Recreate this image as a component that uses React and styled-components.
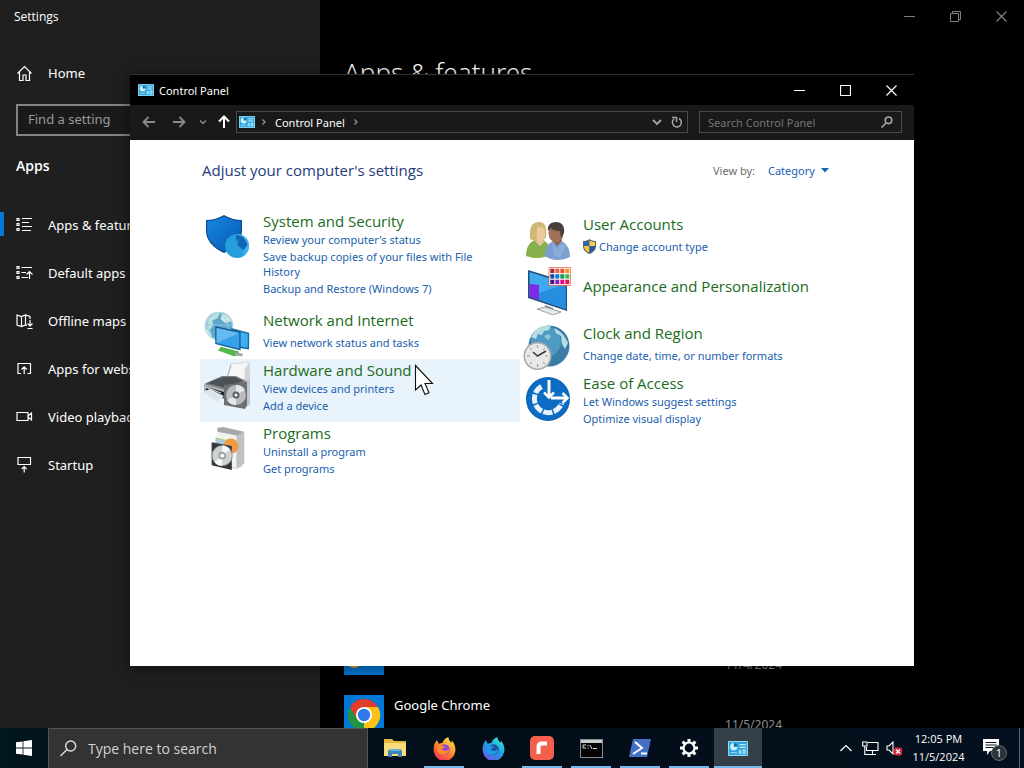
import React, {useState} from 'react';
import styled, {createGlobalStyle} from 'styled-components';

const GlobalStyle = createGlobalStyle`
  * {
    box-sizing: border-box;
  }
  body {
    margin: 0;
    background: #000;
    font-family: "Noto Sans", "Open Sans", sans-serif;
  }
  button, input, select {
    font-family: inherit;
  }
`;
const Screen = styled.div`
  height: 100vh;
  display: flex;
  flex-direction: column;
  overflow: hidden;
`;
const Desktop = styled.main`
  position: relative;
  flex: 1;
  min-height: 0;
  display: flex;
  overflow: hidden;
  background: #000;
`;

/* settings app */
const Sidebar = styled.aside`
  width: 320px;
  flex-shrink: 0;
  background: #1f1f1f;
  color: #fff;
`;
const AppTitle = styled.div`
  height: 32px;
  padding-left: 14px;
  font-family: "Open Sans", sans-serif;
  font-size: 12px;
  line-height: 33px;
`;
const NavLink = styled.a`
  height: 48px;
  padding-left: 16px;
  display: flex;
  align-items: center;
  gap: 15px;
  color: #fff;
  font-size: 13px;
  text-decoration: none;
  svg {
    flex-shrink: 0;
  }
`;
const HomeLink = styled(NavLink)`
  margin-top: 17px;
`;
const NavItem = styled.li`
  position: relative;
  &::before {
    content: "";
    display: ${props => props.$active ? 'block' : 'none'};
    position: absolute;
    left: 0;
    top: 11px;
    width: 4px;
    height: 24px;
    background: #0078d7;
  }
`;
const FindBox = styled.input`
  display: block;
  width: 288px;
  height: 32px;
  margin: 7px 16px 0;
  padding: 0 10px 2px;
  background: #1a1a1a;
  border: 2px solid #858585;
  color: #fff;
  font-size: 13px;
  &::placeholder {
    color: #999;
    opacity: 1;
  }
`;
const NavHeading = styled.h2`
  margin: 20px 0 22px 16px;
  font-family: "Open Sans", sans-serif;
  font-size: 14px;
  line-height: 20px;
  font-weight: 600;
`;
const NavList = styled.ul`
  margin: 0;
  padding: 3px 0 0;
  list-style: none;
`;
const Pane = styled.section`
  flex: 1;
  display: flex;
  flex-direction: column;
  color: #fff;
`;
const CaptionBar = styled.div`
  display: flex;
  justify-content: flex-end;
`;
const CaptionButton = styled.button`
  width: 46px;
  height: ${props => props.$dim ? '32px' : '30px'};
  padding: 0;
  display: flex;
  align-items: center;
  justify-content: center;
  background: none;
  border: 0;
  color: ${props => props.$dim ? '#808080' : '#fff'};
`;
const PaneTitle = styled.h1`
  margin: 19px 0 0 24px;
  font-size: 26px;
  font-weight: 300;
  line-height: 42px;
`;
const AppList = styled.ul`
  margin: auto 0 -27px;
  padding: 0 24px;
  list-style: none;
`;
const AppRow = styled.li`
  width: 438px;
  height: 60px;
  display: flex;
  gap: 10px;
`;
const AppName = styled.span`
  flex: 1;
  font-size: 13px;
  line-height: 20px;
`;
const AppDate = styled.span`
  padding-top: 20px;
  color: #8c8c8c;
  font-size: 12px;
  line-height: 20px;
`;

/* control panel window */
const Window = styled.section`
  position: absolute;
  left: 130px;
  right: 110px;
  top: 74px;
  bottom: 62px;
  display: flex;
  flex-direction: column;
  background: #fff;
  box-shadow: 0 2px 14px rgba(0, 0, 0, 0.5);
`;
const TitleBar = styled.header`
  height: 31px;
  flex-shrink: 0;
  display: flex;
  align-items: center;
  padding-left: 8px;
  gap: 5px;
  background: #000;
  border-top: 1px solid #303030;
  color: #fff;
  font-size: 11px;
`;
const WindowTitle = styled.h1`
  flex: 1;
  margin: 0;
  font-size: inherit;
  font-weight: 400;
`;
const Toolbar = styled.div`
  height: 35px;
  flex-shrink: 0;
  display: flex;
  align-items: center;
  padding: 0 12px 1px 4px;
  background: #191919;
`;
const NavButton = styled.button`
  width: ${props => props.$narrow ? '17px' : '30px'};
  height: 24px;
  padding: 0;
  display: flex;
  align-items: center;
  justify-content: center;
  background: none;
  border: 0;
  color: ${props => props.$on ? '#fff' : '#8a8a8a'};
`;
const UpButton = styled(NavButton)`
  width: 25px;
`;
const AddressBar = styled.div`
  flex: 1;
  height: 22px;
  display: flex;
  align-items: center;
  padding-left: 2px;
  gap: 6px;
  border: 1px solid #4a4a4a;
  color: #999;
`;
const Crumb = styled.a`
  margin: 0 2px;
  color: #fff;
  font-size: 11px;
  text-decoration: none;
`;
const AddressTools = styled.div`
  margin-left: auto;
  display: flex;
`;
const ToolButton = styled.button`
  width: 20px;
  height: 20px;
  padding: 0;
  display: flex;
  align-items: center;
  justify-content: center;
  background: none;
  border: 0;
  color: #a6a6a6;
`;
const SearchField = styled.div`
  width: 203px;
  height: 22px;
  margin-left: 11px;
  display: flex;
  align-items: center;
  padding: 0 4px 0 8px;
  border: 1px solid #4a4a4a;
`;
const SearchInput = styled.input`
  flex: 1;
  min-width: 0;
  padding: 0;
  background: none;
  border: 0;
  color: #fff;
  font-size: 11px;
  &::placeholder {
    color: #757575;
    opacity: 1;
  }
`;
const Content = styled.div`
  flex: 1;
  padding: 19px 74px 0 70px;
`;
const ContentHead = styled.div`
  display: flex;
  justify-content: space-between;
  align-items: center;
  height: 22px;
  padding: 0 11px 0 2px;
  margin-bottom: 29px;
`;
const ContentTitle = styled.h2`
  margin: 0;
  color: #1e3c78;
  font-family: "Open Sans", sans-serif;
  font-size: 15px;
  font-weight: 400;
`;
const ViewBy = styled.div`
  display: flex;
  align-items: center;
  color: #6d6d6d;
  font-size: 11px;
  label {
    margin-right: 13px;
  }
`;
const ViewSelect = styled.select`
  appearance: none;
  padding: 0 6px 0 0;
  background: none;
  border: 0;
  color: #1560b8;
  font-size: 11px;
`;
const Columns = styled.div`
  display: grid;
  grid-template-columns: 1fr 1fr;
  align-items: start;
`;
const Column = styled.ul`
  margin: 0;
  padding: ${props => props.$low ? '3px' : '0'} 0 0;
  list-style: none;
`;
const CategoryItem = styled.li`
  display: flex;
  gap: 12px;
  min-height: ${props => props.$count === 0 ? '59px' : '50px'};
  padding: 1px 20px ${props => props.$count > 2 ? '12px' : props.$count === 2 ? '8px' : '0'} 3px;
  background: ${props => props.$hot ? '#e9f3fb' : 'none'};
  > svg {
    flex-shrink: 0;
    margin: ${props => props.$count === 0 ? '3px' : '1px'} 0 -7px;
  }
`;
const CategoryLink = styled.a`
  display: block;
  color: #1a6b20;
  font-family: "Open Sans", sans-serif;
  font-size: 15px;
  line-height: ${props => props.$count === 0 ? '44px' : '20px'};
  margin-bottom: ${props => props.$count === 1 ? '4px' : '0'};
  text-decoration: none;
`;
const TaskLink = styled.a`
  display: flex;
  align-items: center;
  gap: 3px;
  padding: 1px 0;
  color: #1a60ae;
  font-size: 11px;
  line-height: 15px;
  text-decoration: none;
  svg {
    flex-shrink: 0;
  }
`;
const Pointer = styled.svg`
  position: absolute;
  left: 414px;
  top: 364px;
`;

/* taskbar */
const Taskbar = styled.footer`
  height: 40px;
  flex-shrink: 0;
  display: flex;
  background: linear-gradient(90deg, #02161e, #030d18 50%, #04101e);
  color: #fff;
  font-family: "Open Sans", sans-serif;
`;
const StartButton = styled.button`
  width: 48px;
  padding: 0;
  display: flex;
  align-items: center;
  justify-content: center;
  background: none;
  border: 0;
`;
const TaskSearch = styled.div`
  width: 320px;
  display: flex;
  align-items: center;
  gap: 11px;
  padding-left: 11px;
  background: #333;
  border: 1px solid #545454;
  border-bottom: 0;
  input {
    flex: 1;
    min-width: 0;
    padding: 0;
    background: none;
    border: 0;
    color: #fff;
    font-size: 14px;
  }
  input::placeholder {
    color: #d2d2d2;
    opacity: 1;
  }
`;
const TaskButtons = styled.div`
  flex: 1;
  display: flex;
  gap: 1px;
  padding-left: 3px;
`;
const TaskButton = styled.button`
  position: relative;
  width: 48px;
  padding: 0;
  display: flex;
  align-items: center;
  justify-content: center;
  background: ${props => props.$front ? '#353f47' : 'none'};
  border: 0;
  &::after {
    content: "";
    display: ${props => props.$open ? 'block' : 'none'};
    position: absolute;
    left: ${props => props.$front ? '0' : '4px'};
    right: ${props => props.$front ? '0' : '4px'};
    bottom: 0;
    height: 2px;
    background: #76b9ed;
  }
`;
const Tray = styled.div`
  display: flex;
  align-items: center;
`;
const TrayButton = styled.button`
  width: 24px;
  height: 40px;
  padding: 0;
  display: flex;
  align-items: center;
  justify-content: center;
  background: none;
  border: 0;
`;
const Clock = styled.div`
  width: 65px;
  font-size: 11px;
  line-height: 18px;
  text-align: center;
`;
const NoticeButton = styled(TrayButton)`
  width: 48px;
`;
const ShowDesktop = styled.button`
  width: 5px;
  height: 40px;
  padding: 0;
  background: none;
  border: 0;
  border-left: 1px solid #5c646c;
`;

const Line = ({children, size = 17}) => (
    <svg width={size} height={size} viewBox="0 0 17 17" fill="none" stroke="#fff" strokeWidth="1.2">{children}</svg>
);
const HomeIcon = () => <Line><path d="M1.5 8.5 8.5 1.500 15.500 8.500M3.500 7V15.500H7V10H10V15.500H13.500V7"/></Line>;
const FeaturesIcon = () => <Line><path d="M1 1.500h2v2H1zM1 6.500h2v2H1zM1 11.500h2v2H1zM6 1.500h10M6 5.500h7M6 9.500h10M6 13.500h9"/></Line>;
const DefaultsIcon = () => <Line><path d="M1 1.500h2v2H1zM1 6.500h2v2H1zM1 11.500h2v2H1zM5.500 2.500H16M5.500 7.500H10M5.500 12.500H12M13.500 14V6.500M10.500 9.500l3-3 3 3"/></Line>;
const MapIcon = () => <Line><path d="M11 12.500 9.500 12 5.500 13.500 1 12V2L5.500 3.500 9.500 2 14 3.500V6M5.500 3.500V13.500M9.500 2V12M14 7V13M11.500 10.500 14 13l2.500-2.500M11.500 15.500H16.500"/></Line>;
const WebIcon = () => <Line><path d="M5 12.500H2V2.500H14.500V12.500H11.500M8.200 13V6M5.500 8.500l2.700-2.700 2.700 2.700"/></Line>;
const VideoIcon = () => <Line><path d="M1 3.500h11v8H1zM12 7 15.500 4V11L12 8z"/></Line>;
const StartupIcon = () => <Line><path d="M2 .5h12.500v7H2zM8.200 15.500V9.500M5.800 12l2.400-2.500L10.600 12"/></Line>;

const Minimize = () => <svg width="11" height="11"><path d="M0 5.500h11" stroke="currentColor"/></svg>;
const Maximize = () => <svg width="11" height="11"><path d="M.5.5h10v10H.5z" fill="none" stroke="currentColor" strokeWidth="1.2"/></svg>;
const Restore = () => <svg width="11" height="11" fill="none" stroke="currentColor"><path d="M.5 2.500h8v8h-8zM2.500 2.500v-2h8v8h-2"/></svg>;
const Close = () => <svg width="11" height="11"><path d="M.5.5l10 10M10.500.5l-10 10" stroke="currentColor" strokeWidth="1.200"/></svg>;

const PanelIcon = ({width = 16}) => (
    <svg width={width} height={width * 12 / 16} viewBox="0 0 16 12">
        <rect width="16" height="12" rx="0.600" fill="#8bdcf5"/>
        <rect x="0.800" y="0.800" width="14.400" height="10.400" fill="#33a4de"/>
        <circle cx="4.700" cy="4.500" r="2.900" fill="#c9f1fc"/>
        <path d="M4.700 4.500V1.600A2.900 2.900 0 0 1 7.600 4.500z" fill="#1269a8"/>
        <path d="M9.200 2.800h5M9.200 5h5" stroke="#b9ecfc" strokeWidth="1"/>
        <path d="M2 9.300h5M9 7.500h1.500v2.500H9zM12 7h2v3h-2z" stroke="#a6e6fb" strokeWidth="0.700" fill="#74cef2"/>
    </svg>
);
const Arrow = ({d, w = 1.800}) => <svg width="14" height="14" viewBox="0 0 14 14" fill="none" stroke="currentColor" strokeWidth={w}><path d={d}/></svg>;
const Chevron = () => <svg width="6" height="8" viewBox="0 0 6 8" fill="none" stroke="#999" strokeWidth="1.300"><path d="M1.500 1.500 4 4 1.500 6.500"/></svg>;

const UacShield = ({size = 13}) => (
    <svg width={size} height={size + 2} viewBox="0 0 13 15">
        <path d="M6.500 0C4.500 1.500 2.500 2 0 2v5c0 4 3 6.500 6.500 8C10 13.500 13 11 13 7V2C10.500 2 8.500 1.500 6.500 0z" fill="#5c6268"/>
        <path d="M6.500 1.200C5 2.300 3 2.900 1 3v4h5.500z" fill="#2d62b5"/>
        <path d="M6.500 1.200C8 2.300 10 2.900 12 3v4H6.500z" fill="#f5d34b"/>
        <path d="M1 7c0 3.500 2.500 5.500 5.500 6.800V7z" fill="#f2c531"/>
        <path d="M12 7c0 3.500-2.500 5.500-5.500 6.800V7z" fill="#2459ad"/>
    </svg>
);

const Art = ({children, viewBox = '0 0 48 48'}) => <svg width="48" height="48" viewBox={viewBox}>{children}</svg>;
const SecurityArt = () => (
    <Art>
        <defs>
            <linearGradient id="shield" x1="0" y1="0" x2="1" y2="1"><stop offset="0" stopColor="#1688df"/><stop offset="1" stopColor="#0558b4"/></linearGradient>
        </defs>
        <path d="M21 3C16 6 9 8 3 8v11c0 9 7 17 18 22 11-5 18-13 18-22V8C33 8 26 6 21 3z" fill="#0b4b8f"/>
        <path d="M21 4.500C16 7 10 9 4.200 9v10c0 8.500 6.500 15.500 16.800 20.500C31.300 34.500 37.800 27.500 37.800 19V9C32 9 26 7 21 4.500z" fill="url(#shield)"/>
        <circle cx="34" cy="34" r="12" fill="#249edd"/>
        <path d="M34 22a12 12 0 0 1 12 12c0 4-2 7.500-4.500 9.500z" fill="#43b4ec"/>
        <path d="M33 23c6 0 10 4 11.500 10l-4 5-5-1-2-6z" fill="#1266b7"/>
        <path d="M36 27l-2 6 5 4 4 1c-4 4-10 2-11-3 0-3 1-6 4-8z" fill="#2b9ddd"/>
    </Art>
);
const NetworkArt = () => (
    <Art viewBox="0 0 51 51">
        <circle cx="17" cy="16" r="15" fill="#5ba9cc"/>
        <circle cx="17" cy="16" r="14.500" fill="none" stroke="#b3d9e6" strokeWidth="1.500"/>
        <path d="M5 9c4-5 8-7 13-7l-3 6-5 2 1 5-5 7-3-6z" fill="#b9dfe1"/>
        <path d="M20 3c5 1 8 4 10 8l-6 2-5-4zM3 18l5 4 2 7c-5-3-7-7-7-11z" fill="#d3e9e3"/>
        <path d="M8 4c-5 8-4 17 2 25M19 2c7 7 9 14 7 22M2 15h30" stroke="#96cae0" fill="none"/>
        <path d="M19 38l19 5v4l-5 1-17-6z" fill="#51b84a"/>
        <path d="M30 18l19 5v18l-19-3z" fill="#176ca5"/>
        <path d="M31 20l16.500 4.500V39L31 36z" fill="#3faff2"/>
        <path d="M13 16l27 6v20l-27-7z" fill="#165f96"/>
        <path d="M14.500 18 38.500 23.500V40L14.500 34z" fill="#389fe9"/>
        <path d="M14.500 18 38.500 23.500 14.500 34z" fill="#65bbf1"/>
        <path d="M34 45l8 2" stroke="#a4a4a4" strokeWidth="3"/>
    </Art>
);
const HardwareArt = () => (
    <Art>
        <path d="M28 3l19-2-5 18H23z" fill="#f5f6f7" stroke="#c8cbd0" strokeWidth=".7"/>
        <path d="M42 7l5-6v20l-6 4z" fill="#d1d4d8"/>
        <path d="M28 4l-4 14" stroke="#aab0b6"/>
        <path d="M1 23l18-8h14l10 5-4 13H22z" fill="#7b8084"/>
        <path d="M4 22l16-6h12l8 4-17 7z" fill="#4c5156"/>
        <path d="M1 23l22 6v10L1 30z" fill="#a7adb2"/>
        <path d="M3 26l18 5v6L3 29z" fill="#202428"/>
        <path d="M0 31l7-3 14 7-7 6z" fill="#dde5ea"/>
        <path d="M2 26l16 6" stroke="#dbe7ee"/>
        <path d="M43 20l4-2v25l-6 5z" fill="#c4c6c8"/>
        <path d="M21 24l23-3v23l-2 4-21-4z" fill="#6b7075"/>
        <circle cx="33" cy="34" r="10" fill="#b9bdc1"/>
        <path d="M33 24a10 10 0 0 1 9 5L33 34zM33 44a10 10 0 0 1-9-5L33 34z" fill="#e4e7e9"/>
        <circle cx="33" cy="34" r="3.500" fill="#5a6067"/>
        <circle cx="33" cy="34" r="1.500" fill="#fff"/>
    </Art>
);
const ProgramsArt = () => (
    <Art viewBox="-1 -1 50 50">
        <path d="M14 3l26 4v36l-7 3-19-5z" fill="#d2d2d0"/>
        <path d="M14 3l20 5v37L14 40z" fill="#f2f2ef"/>
        <path d="M34 10l8-3v33l-8 6z" fill="#bfc1c3"/>
        <path d="M14 3l6-1 22 5-8 4-20-4z" fill="#a6a9ac"/>
        <path d="M12 13l18 4v8l-18-4z" fill="#a9cf8d"/>
        <circle cx="28" cy="22" r="8" fill="#f09b45"/>
        <path d="M13 14l9 3-3 8-7-5z" fill="#a9cae4"/>
        <path d="M8 18l21 4v25L8 42z" fill="#35383b"/>
        <circle cx="19" cy="32" r="10.500" fill="#ced2d3" stroke="#8e9496"/>
        <path d="M19 21.500a10 10 0 0 1 8 4L19 32zM19 42.500a10 10 0 0 1-8-4L19 32z" fill="#f7f8f8"/>
        <circle cx="19" cy="32" r="4" fill="#9da3a6"/>
        <circle cx="19" cy="32" r="2" fill="#fff"/>
    </Art>
);
const UsersArt = () => (
    <Art viewBox="0 -1 48 48">
        <path d="M3 40c0-8 3-14 9-16h8c5 2 8 8 8 14-7 5-17 5-25 2z" fill="#86b04b"/>
        <path d="M7 23c-1-12 2-17 9-17 6 0 8 4 7 16-5 3-11 4-16 1z" fill="#cfb874"/>
        <path d="M14 12c5-2 8 0 8 5 0 6-2 9-5 9s-4-4-3-8z" fill="#edc9a2"/>
        <path d="M12 25l5 5 5-5z" fill="#efc395"/>
        <path d="M22 40c0-9 3-13 9-15h7c6 2 9 9 9 16-9 4-18 4-25-1z" fill="#7b9fd0"/>
        <path d="M29 24l5 6 5-5-1-6h-8z" fill="#8d6148"/>
        <ellipse cx="33" cy="17" rx="7.500" ry="9.500" fill="#9e7158"/>
        <path d="M25 15c-1-6 3-9 8-9 6 0 9 4 8 11l-3 5-1-7c-4 0-8-1-9-3z" fill="#4a403b"/>
        <path d="M29 27l5 6 5-6 4 2-6 13-6-3z" fill="#8badd9"/>
    </Art>
);
const AppearanceArt = () => (
    <Art>
        <path d="M5 3l39 12v29L5 31z" fill="#214e7a"/>
        <path d="M6.500 5l36 11.500v25.500L6.500 29.500z" fill="#40a9ee"/>
        <path d="M6.500 29.500 42.500 17v25z" fill="#268ee0"/>
        <path d="M6.500 17 16 18v15L6.500 29.500z" fill="#8127e8"/>
        <path d="M22 38l8 3v4l-8-2z" fill="#8b8e91"/>
        <path d="M14 42l8-2 16 5-8 3z" fill="#e6eaec" stroke="#858d93" strokeWidth=".8"/>
        <path d="M26 .4h21.600v18H26z" fill="#fff" stroke="#e54d2c" strokeWidth=".7"/>
        {['#a32630', '#ed6245', '#f04f2f', '#f49423', '#164aa9', '#0a7dcb', '#16965b', '#43b64c', '#45107c', '#8123ac', '#e40b84', '#e3174f'].map((fill, i) => (
            <rect key={fill} x={27.300 + (i % 4) * 5} y={1.700 + Math.floor(i / 4) * 5.500} width="4" height="4.400" fill={fill}/>
        ))}
    </Art>
);
const ClockArt = () => (
    <Art>
        <circle cx="26" cy="22" r="20.500" fill="#397ca5"/>
        <circle cx="23" cy="18" r="15" fill="#4e9ac3"/>
        <path d="M12 7c5-5 10-6 16-5l-2 4-5 1-2 4-4-1-2 5-5-2zM31 4c7 3 11 8 14 15l-3 6-3-5-1-8-5-3z" fill="#b4dde4"/>
        <path d="M21 12l5-2 2 3-3 3z" fill="#8fc8d7"/>
        <circle cx="14.500" cy="32" r="14" fill="#a7abae"/>
        <circle cx="14.500" cy="32" r="12.500" fill="#e8e8e7"/>
        <path d="M14.500 21v3M14.500 40v3M4 32h3M22 32h3M7 24l2 2M20 38l2 2M22 24l-2 2M7 40l2-2" stroke="#93989c"/>
        <path d="M10 28l4.500 4L23 27" fill="none" stroke="#3a3a3a" strokeWidth="1.500"/>
    </Art>
);
const EaseArt = () => (
    <Art>
        <circle cx="25" cy="25" r="22" fill="#0860b3"/>
        <circle cx="25" cy="25" r="21" fill="#0c6cc4"/>
        <path d="M18.500 12.500a14 14 0 1 0 20 17" fill="none" stroke="#eaf3fb" strokeWidth="5" strokeDasharray="9 1.500"/>
        <path d="M26 6v16M28 24h15" stroke="#fff" strokeWidth="3"/>
        <path d="M21 18.500l5 5 5-5M39.500 19l5 5-5 5" fill="none" stroke="#fff" strokeWidth="2.500"/>
    </Art>
);

const columns = [
    [
        {name: 'System and Security', Icon: SecurityArt, tasks: ["Review your computer's status", 'Save backup copies of your files with File History', 'Backup and Restore (Windows 7)']},
        {name: 'Network and Internet', Icon: NetworkArt, tasks: ['View network status and tasks']},
        {name: 'Hardware and Sound', Icon: HardwareArt, tasks: ['View devices and printers', 'Add a device'], hot: true},
        {name: 'Programs', Icon: ProgramsArt, tasks: ['Uninstall a program', 'Get programs']},
    ],
    [
        {name: 'User Accounts', Icon: UsersArt, tasks: ['Change account type'], shield: true},
        {name: 'Appearance and Personalization', Icon: AppearanceArt, tasks: []},
        {name: 'Clock and Region', Icon: ClockArt, tasks: ['Change date, time, or number formats']},
        {name: 'Ease of Access', Icon: EaseArt, tasks: ['Let Windows suggest settings', 'Optimize visual display']},
    ],
];
const navItems = [
    ['Apps & features', FeaturesIcon],
    ['Default apps', DefaultsIcon],
    ['Offline maps', MapIcon],
    ['Apps for websites', WebIcon],
    ['Video playback', VideoIcon],
    ['Startup', StartupIcon],
];

const FirefoxTile = () => (
    <svg width="40" height="40" viewBox="0 0 40 40">
        <rect width="40" height="40" fill="#0078d7"/>
        <circle cx="10" cy="25" r="8" fill="#f29b32"/>
    </svg>
);
const ChromeTile = () => (
    <svg width="40" height="40" viewBox="0 0 40 40">
        <rect width="40" height="40" fill="#0078d7"/>
        <path d="M20 20 6.100 12A16 16 0 0 1 33.900 12z" fill="#e33b2e"/>
        <path d="M20 20 33.900 12A16 16 0 0 1 20 36z" fill="#fbc116"/>
        <path d="M20 20 20 36A16 16 0 0 1 6.100 12z" fill="#229342"/>
        <path d="M20 12H33.900A16 16 0 0 1 20 36l7-12z" fill="#fbc116"/>
        <path d="M6.100 12 13 24l7-12z" fill="#e33b2e"/>
        <circle cx="20" cy="20" r="8" fill="#fff"/>
        <circle cx="20" cy="20" r="6.200" fill="#3278e8"/>
    </svg>
);
const FolderIcon = () => (
    <svg width="22" height="18" viewBox="0 0 22 18">
        <path d="M0 0h8l2 2h12v15H0z" fill="#e7b73b"/>
        <path d="M0 4h22v13H0z" fill="#f8dc7c"/>
        <path d="M4 18v-6l2-2h10l2 2v6h-4v-3H8v3z" fill="#3c83b8"/>
        <path d="M6 10h10v2H6z" fill="#65b0dc"/>
    </svg>
);
const FoxIcon = ({id, a, b, c, core}) => (
    <svg width="23" height="23" viewBox="0 0 24 24">
        <defs>
            <linearGradient id={id} x1="0.800" y1="0" x2="0.200" y2="1"><stop offset="0" stopColor={a}/><stop offset=".5" stopColor={b}/><stop offset="1" stopColor={c}/></linearGradient>
        </defs>
        <path d="M4 3l2 4 4-1c1-3 3-5 6-6 0 3 2 4 3 6l1-2c3 4 4 8 3 12a11.200 11.200 0 0 1-22 0C0 11 1 7 4 3z" fill={`url(#${id})`}/>
        <circle cx="12" cy="13" r="5.500" fill={core}/>
        <path d="M5 10c3-2 5-1 8 1-2 0-3 1-4 2 2 2 6 2 8-1 0 5-4 7-8 6-4 0-6-4-4-8z" fill={b}/>
    </svg>
);
const RemoteIcon = () => (
    <svg width="24" height="24" viewBox="0 0 24 24">
        <rect width="24" height="24" rx="5" fill="#f4604c"/>
        <path d="M8.500 18v-7c0-2.500 1-3.500 3.500-3.500h5" fill="none" stroke="#fff" strokeWidth="4"/>
    </svg>
);
const ConsoleIcon = () => (
    <svg width="23" height="19" viewBox="0 0 23 19">
        <rect x=".5" y=".5" width="22" height="18" fill="#050505" stroke="#8a8a8a"/>
        <path d="M1 1h21v3H1z" fill="#c9cccd"/>
        <path d="M6 6H3v3h3M8 6v1M8 8.500v1M10 6l2 4M13 9.500h4" fill="none" stroke="#ddd"/>
    </svg>
);
const PowerShellIcon = () => (
    <svg width="24" height="20" viewBox="0 0 24 20">
        <path d="M5 1h18l-4 18H1z" fill="#4370c4"/>
        <path d="M7 4l7 6-9 6M13 15.500h6" fill="none" stroke="#fff" strokeWidth="2"/>
    </svg>
);
const GearIcon = () => (
    <svg width="20" height="20" viewBox="0 0 20 20" fill="none" stroke="#fff">
        <circle cx="10" cy="10" r="5.500" strokeWidth="2.200"/>
        <path d="M10 1v3M10 16v3M1 10h3M16 10h3M3.600 3.600l2.200 2.200M14.200 14.200l2.200 2.200M3.600 16.400l2.200-2.200M14.200 5.800l2.200-2.200" strokeWidth="3"/>
    </svg>
);
const taskApps = [
    {name: 'File Explorer', icon: <FolderIcon/>},
    {name: 'Firefox', icon: <FoxIcon id="fox" a="#ffe54a" b="#ff8a2b" c="#eb2860" core="#8e4bd3"/>, open: true},
    {name: 'Firefox Developer Edition', icon: <FoxIcon id="dev" a="#35efd0" b="#1d9ae6" c="#7452df" core="#214d9e"/>},
    {name: 'Remote', icon: <RemoteIcon/>, open: true},
    {name: 'Command Prompt', icon: <ConsoleIcon/>, open: true},
    {name: 'PowerShell', icon: <PowerShellIcon/>, open: true},
    {name: 'Settings', icon: <GearIcon/>, open: true},
    {name: 'Control Panel', icon: <PanelIcon width={20}/>, open: true, front: true},
];

const Settings = () => (
    <>
        <Sidebar>
            <AppTitle>Settings</AppTitle>
            <HomeLink href="#home"><HomeIcon/>Home</HomeLink>
            <FindBox type="text" placeholder="Find a setting" aria-label="Find a setting"/>
            <NavHeading>Apps</NavHeading>
            <NavList>
                {navItems.map(([name, Icon], i) => (
                    <NavItem key={name} $active={i === 0}>
                        <NavLink href="#apps"><Icon/>{name}</NavLink>
                    </NavItem>
                ))}
            </NavList>
        </Sidebar>
        <Pane>
            <CaptionBar>
                <CaptionButton $dim aria-label="Minimize"><Minimize/></CaptionButton>
                <CaptionButton $dim aria-label="Restore"><Restore/></CaptionButton>
                <CaptionButton $dim aria-label="Close"><Close/></CaptionButton>
            </CaptionBar>
            <PaneTitle>Apps &amp; features</PaneTitle>
            <AppList>
                <AppRow><FirefoxTile/><AppName/><AppDate>11/4/2024</AppDate></AppRow>
                <AppRow><ChromeTile/><AppName>Google Chrome</AppName><AppDate>11/5/2024</AppDate></AppRow>
            </AppList>
        </Pane>
    </>
);

const Category = ({name, Icon, tasks, hot, shield}) => (
    <CategoryItem $hot={hot} $count={tasks.length}>
        <Icon/>
        <div>
            <CategoryLink href="#category" $count={tasks.length}>{name}</CategoryLink>
            {tasks.map(task => <TaskLink key={task} href="#task">{shield && <UacShield/>}{task}</TaskLink>)}
        </div>
    </CategoryItem>
);

const ControlPanel = () => {
    const [view, setView] = useState('Category');
    return (
        <Window>
            <TitleBar>
                <PanelIcon/>
                <WindowTitle>Control Panel</WindowTitle>
                <CaptionBar>
                    <CaptionButton aria-label="Minimize"><Minimize/></CaptionButton>
                    <CaptionButton aria-label="Maximize"><Maximize/></CaptionButton>
                    <CaptionButton aria-label="Close"><Close/></CaptionButton>
                </CaptionBar>
            </TitleBar>
            <Toolbar>
                <NavButton aria-label="Back"><Arrow d="M13 7H1.500M6.500 2 1.500 7l5 5"/></NavButton>
                <NavButton aria-label="Forward"><Arrow d="M1 7h11.500M7.500 2l5 5-5 5"/></NavButton>
                <NavButton $narrow aria-label="Recent locations"><Arrow d="M4 5.500 7 8.500l3-3" w={1.500}/></NavButton>
                <UpButton $on aria-label="Up"><Arrow d="M7 13V1.500M2 6.500l5-5 5 5" w={2}/></UpButton>
                <AddressBar>
                    <PanelIcon/>
                    <Chevron/>
                    <Crumb href="#control-panel">Control Panel</Crumb>
                    <Chevron/>
                    <AddressTools>
                        <ToolButton aria-label="Previous locations"><Arrow d="M3 5l4 4 4-4"/></ToolButton>
                        <ToolButton aria-label="Refresh"><Arrow d="M9 3.500A4.500 4.500 0 1 1 4 4M2 2.500h4.500V7" w={1.500}/></ToolButton>
                    </AddressTools>
                </AddressBar>
                <SearchField>
                    <SearchInput type="text" placeholder="Search Control Panel" aria-label="Search Control Panel"/>
                    <ToolButton aria-label="Search"><Arrow d="M6 8 1.500 12.500M8.500 2a3.300 3.300 0 1 1 0 6.600 3.300 3.300 0 0 1 0-6.600" w={1.600}/></ToolButton>
                </SearchField>
            </Toolbar>
            <Content>
                <ContentHead>
                    <ContentTitle>Adjust your computer's settings</ContentTitle>
                    <ViewBy>
                        <label htmlFor="view">View by:</label>
                        <ViewSelect id="view" value={view} onChange={e => setView(e.target.value)}>
                            <option>Category</option>
                        </ViewSelect>
                        <svg width="8" height="5"><path d="M0 0h8L4 4.500z" fill="#1560b8"/></svg>
                    </ViewBy>
                </ContentHead>
                <Columns>
                    {columns.map((items, i) => (
                        <Column key={i} $low={i === 1}>
                            {items.map(item => <Category key={item.name} {...item}/>)}
                        </Column>
                    ))}
                </Columns>
            </Content>
        </Window>
    );
};

const App = () => (
    <>
        <GlobalStyle/>
        <Screen>
            <Desktop>
                <Settings/>
                <ControlPanel/>
                <Pointer width="20" height="34" viewBox="0 0 20 34">
                    <path d="M1.500 1.500V26l5.500-5 4 9.500 4-1.700L11 19.500h7.500z" fill="#fff" stroke="#111" strokeWidth="1.100"/>
                </Pointer>
            </Desktop>
            <Taskbar>
                <StartButton aria-label="Start">
                    <svg width="16" height="16" viewBox="0 0 16 16" fill="#fff"><path d="M0 2.300 6.600 1.400V7.600H0zM7.400 1.300 16 0V7.600H7.400zM0 8.400H6.600V14.600L0 13.700zM7.400 8.400H16V16L7.400 14.700z"/></svg>
                </StartButton>
                <TaskSearch>
                    <svg width="17" height="17" viewBox="0 0 17 17" fill="none" stroke="#ddd" strokeWidth="1.400"><circle cx="10.700" cy="6" r="5"/><path d="M7 9.500.5 16"/></svg>
                    <input type="text" placeholder="Type here to search" aria-label="Type here to search"/>
                </TaskSearch>
                <TaskButtons>
                    {taskApps.map(app => (
                        <TaskButton key={app.name} aria-label={app.name} $open={app.open} $front={app.front}>{app.icon}</TaskButton>
                    ))}
                </TaskButtons>
                <Tray>
                    <TrayButton aria-label="Show hidden icons">
                        <svg width="12" height="8"><path d="M.5 7 6 1.500 11.500 7" fill="none" stroke="#fff" strokeWidth="1.200"/></svg>
                    </TrayButton>
                    <TrayButton aria-label="Network">
                        <svg width="17" height="15" viewBox="0 0 17 15" fill="none" stroke="#fff" strokeWidth="1.100"><path d="M6 1.500h10v8H4.500V6M.7 1h4.300v4H.7zM2.800 5v8.500H9M10.500 9.500v4M7 13.500h7"/></svg>
                    </TrayButton>
                    <TrayButton aria-label="Volume muted">
                        <svg width="17" height="15" viewBox="0 0 17 15"><path d="M1 5h2l4-4v12L3 9H1z" fill="none" stroke="#fff" strokeWidth="1.100"/><rect x="8" y="6.500" width="8" height="8" rx="2" fill="#e0253a"/><path d="M10 8.500l4 4M14 8.500l-4 4" stroke="#fff" strokeWidth="1.200"/></svg>
                    </TrayButton>
                    <Clock>12:05 PM<br/>11/5/2024</Clock>
                    <NoticeButton aria-label="1 new notification">
                        <svg width="26" height="26" viewBox="0 0 26 26">
                            <path d="M1 4h16v12H8l-3 4v-4H1z" fill="#fff"/>
                            <path d="M3.500 7.500h11M3.500 10h11M3.500 12.500h8" stroke="#0a1420"/>
                            <circle cx="17" cy="18" r="7.500" fill="#2c3238" stroke="#666b70"/>
                            <text x="17" y="22" fontSize="11" fill="#fff" textAnchor="middle">1</text>
                        </svg>
                    </NoticeButton>
                    <ShowDesktop aria-label="Show desktop"/>
                </Tray>
            </Taskbar>
        </Screen>
    </>
);

export default App;
